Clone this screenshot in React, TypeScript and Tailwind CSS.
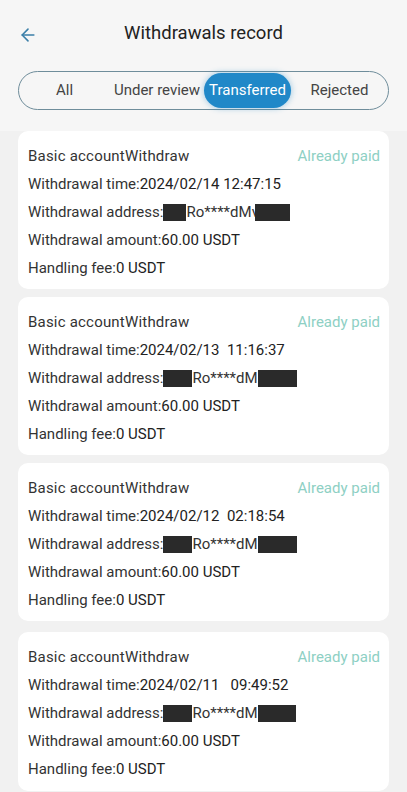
import { ArrowLeft } from "lucide-react";

type Record = {
  time: string;
  blockA: number;
  blockB: number;
  tail: string;
};

const records: Record[] = [
  { time: "2024/02/14 12:47:15", blockA: 23, blockB: 35, tail: "Ro****dMv" },
  { time: "2024/02/13  11:16:37", blockA: 29, blockB: 39, tail: "Ro****dM" },
  { time: "2024/02/12  02:18:54", blockA: 29, blockB: 39, tail: "Ro****dM" },
  { time: "2024/02/11   09:49:52", blockA: 29, blockB: 38, tail: "Ro****dM" },
];

const tabs = ["All", "Under review", "Transferred", "Rejected"];

function Block(props: { w: number }) {
  return (
    <span
      className="inline-block h-[17px] bg-[#2a2a2a] align-middle"
      style={{ width: props.w }}
    />
  );
}

function RecordCard(props: { r: Record; last?: boolean }) {
  const { r } = props;
  return (
    <div
      className={
        "rounded-[10px] bg-white pl-[10px] pr-[9px] pt-[11px] " +
        (props.last ? "mt-[3px] pb-[8px]" : "pb-[7px]")
      }
    >
      <div className="flex h-[28px] items-center justify-between">
        <span className="text-[#333] tracking-[0.2px]">Basic accountWithdraw</span>
        <span className="text-[#8ed0c4]">Already paid</span>
      </div>
      <div className="flex h-[28px] items-center whitespace-pre">
        <span className="text-[#333]">Withdrawal time:</span>
        <span className="text-[#222]">{r.time}</span>
      </div>
      <div className="flex h-[28px] items-center whitespace-pre">
        <span className="text-[#333]">Withdrawal address:</span>
        <Block w={r.blockA} />
        <span className="text-[#333]">{r.tail}</span>
        <span className={r.tail.endsWith("v") ? "-ml-[4px]" : ""}>
          <Block w={r.blockB} />
        </span>
      </div>
      <div className="flex h-[28px] items-center">
        <span className="text-[#333]">Withdrawal amount:</span>
        <span className="text-[#222]">60.00 USDT</span>
      </div>
      <div className="flex h-[28px] items-center">
        <span className="text-[#333]">Handling fee:</span>
        <span className="text-[#222]">0 USDT</span>
      </div>
    </div>
  );
}

export default function App() {
  return (
    <div className="min-h-screen bg-[#f1f1f1] font-['Roboto','Noto_Sans',sans-serif] text-[15px]">
      <div className="bg-[#f6f6f6] pb-[21px]">
        <header className="relative flex h-[68px] items-center justify-center">
          <ArrowLeft
            className="absolute left-[18px] top-[25px] text-[#3b7fa8]"
            size={20}
            strokeWidth={1.9}
          />
          <h1 className="text-[18.5px] text-[#222]">Withdrawals record</h1>
        </header>

        <nav className="mx-[18px] mt-[3px] flex h-[39px] items-center rounded-full border border-[#6f8d9b] text-[#444]">
          {tabs.map((t, i) => {
            const active = t === "Transferred";
            const w =
              i === 0 ? "w-[91px]" : i === 1 ? "w-[94px]" : i === 2 ? "w-[87px]" : "flex-1";
            return (
              <div key={t} className={"flex justify-center " + w}>
                {active ? (
                  <span className="flex h-[35px] w-full items-center justify-center rounded-full bg-[#2088c8] text-white shadow-[0_0_6px_rgba(32,136,200,0.45)]">
                    {t}
                  </span>
                ) : (
                  <span>{t}</span>
                )}
              </div>
            );
          })}
        </nav>
      </div>

      <main className="flex flex-col gap-2 px-[18px]">
        {records.map((r, i) => (
          <RecordCard key={r.time} r={r} last={i === records.length - 1} />
        ))}
      </main>
    </div>
  );
}
